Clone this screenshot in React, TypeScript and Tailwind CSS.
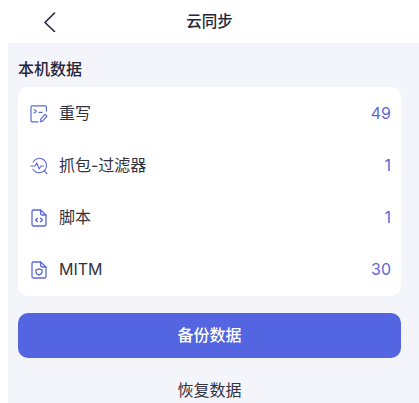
import React from "react";

const c = "#5b68d8";

const Rewrite = () => (
  <svg width="18" height="18" viewBox="0 0 18 18" fill="none" stroke={c} strokeWidth="1.2" strokeLinecap="round" strokeLinejoin="round">
    <path d="M16.4 6V2.2a1.4 1.4 0 0 0-1.4-1.4H2.4A1.4 1.4 0 0 0 1 2.2v13.2a1.4 1.4 0 0 0 1.4 1.4H8" />
    <path d="M4.2 4.6l2.2 1.7-2.2 1.7M9 7.4h3" />
    <path d="M10.8 16.8l-.2-2.4 4.4-5 2 1.7-4.4 5z" />
  </svg>
);
const Capture = () => (
  <svg width="20" height="20" viewBox="0 0 20 20" fill="none" stroke={c} strokeWidth="1.2" strokeLinecap="round" strokeLinejoin="round">
    <path d="M3.4 5.6A8 8 0 1 1 10 17.4a8 8 0 0 1-6.8-3.8" />
    <path d="M1 10h4.6l2-3.4 2.6 6.8 2-3.4H15" />
    <path d="M15.6 15.2l3.2 3.4" />
  </svg>
);
const Script = () => (
  <svg width="16" height="18" viewBox="0 0 16 18" fill="none" stroke={c} strokeWidth="1.3" strokeLinecap="round" strokeLinejoin="round">
    <path d="M9.6 1H2.4A1.4 1.4 0 0 0 1 2.4v13.2A1.4 1.4 0 0 0 2.4 17h11.2a1.4 1.4 0 0 0 1.4-1.4V6z" />
    <path d="M9.6 1v3.6A1.4 1.4 0 0 0 11 6h4" />
    <path d="M6.4 9.2L4.6 11l1.8 1.8M9.6 9.2l1.8 1.8-1.8 1.8" />
  </svg>
);
const Mitm = () => (
  <svg width="16" height="18" viewBox="0 0 16 18" fill="none" stroke={c} strokeWidth="1.3" strokeLinecap="round" strokeLinejoin="round">
    <path d="M9.6 1H2.4A1.4 1.4 0 0 0 1 2.4v13.2A1.4 1.4 0 0 0 2.4 17h11.2a1.4 1.4 0 0 0 1.4-1.4V6z" />
    <path d="M9.6 1v3.6A1.4 1.4 0 0 0 11 6h4" />
    <path d="M8 7.8l3 1v2.2c0 1.6-1.3 2.6-3 3.2-1.7-.6-3-1.6-3-3.2V8.8z" />
  </svg>
);

const rows = [
  { icon: <Rewrite />, label: "重写", n: "49" },
  { icon: <Capture />, label: "抓包-过滤器", n: "1" },
  { icon: <Script />, label: "脚本", n: "1" },
  { icon: <Mitm />, label: "MITM", n: "30" },
];

export default function App() {
  return (
    <div
      className="w-[419px] h-[403px] overflow-hidden bg-white flex flex-col text-[#26263a]"
      style={{ fontFamily: 'Inter, "Noto Sans CJK SC", sans-serif' }}
    >
      <header className="h-[43px] shrink-0 flex items-center justify-center relative">
        <svg className="absolute left-[43px] top-[12px]" width="13" height="20" viewBox="0 0 13 20" fill="none" stroke="#26263a" strokeWidth="1.6" strokeLinecap="round" strokeLinejoin="round">
          <path d="M11.5 1L2 10.5l9.5 9" />
        </svg>
        <span className="text-[15.5px] font-medium">云同步</span>
      </header>
      <main className="flex-1 ml-2 bg-[#f4f5fb] pl-[10px] pr-[18px] flex flex-col">
        <h2 className="text-[16px] leading-[20px] font-medium mt-[16px] mb-[8px]">本机数据</h2>
        <ul className="h-[209px] bg-white rounded-[10px] flex flex-col pt-[0.5px] pl-[12px] pr-[10px]">
          {rows.map((r) => (
            <li key={r.label} className="h-[52.25px] flex items-center">
              <span className="w-[18px] mr-[11px] flex justify-center shrink-0">{r.icon}</span>
              <span className="flex-1 text-[16px] pb-[1px] text-[#33333f]">{r.label}</span>
              <span className="text-[16px] pb-[1px] text-[#5b68d8]">{r.n}</span>
            </li>
          ))}
        </ul>
        <button className="mt-[17px] h-[45px] shrink-0 pb-[2px] rounded-[10px] bg-[#5365e0] text-white text-[16px] font-medium">备份数据</button>
        <div className="mt-[19px] text-center text-[16px] leading-[26px] text-[#33333f]">恢复数据</div>
      </main>
    </div>
  );
}
